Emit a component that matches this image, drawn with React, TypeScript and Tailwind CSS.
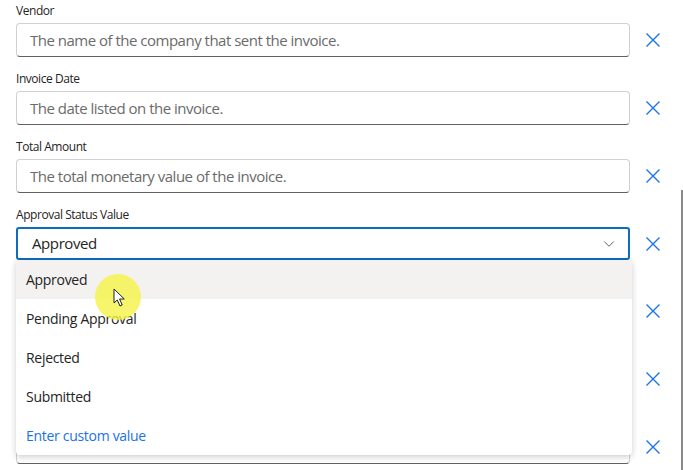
import { ChevronDown } from 'lucide-react';

const fields = [
  { label: 'Vendor', placeholder: 'The name of the company that sent the invoice.' },
  { label: 'Invoice Date', placeholder: 'The date listed on the invoice.' },
  { label: 'Total Amount', placeholder: 'The total monetary value of the invoice.' },
];

const options = ['Approved', 'Pending Approval', 'Rejected', 'Submitted'];

const XIcon = () => (
  <svg width="16" height="16" viewBox="0 0 16 16" className="text-[#1a73e8]">
    <path d="M1.5 1.5 L14.5 14.5 M14.5 1.5 L1.5 14.5" stroke="currentColor" strokeWidth="1.4" fill="none" />
  </svg>
);

const Row = ({ label, children }: { label?: string; children: React.ReactNode }) => (
  <div className="flex flex-col">
    <div className="h-[18px] mb-[3px] text-[12px] tracking-[-0.45px] leading-[18px] text-[#242424]">{label}</div>
    <div className="flex items-center">
      <div className="w-[614px]">{children}</div>
      <button className="ml-[15px] w-[16px] h-[16px] flex items-center justify-center">
        <XIcon />
      </button>
    </div>
  </div>
);

const TextBox = ({ placeholder }: { placeholder: string }) => (
  <div className="h-[34px] rounded-[4px] border border-[#d1d1d1] border-b-[#616161] bg-white flex items-center px-[13px] text-[15px] tracking-[-0.5px] text-[#6b6b6b]">
    {placeholder}
  </div>
);

export default function App() {
  return (
    <div
      className="relative w-[683px] h-[470px] overflow-hidden bg-white"
      style={{ fontFamily: '"Open Sans", "Noto Sans", sans-serif' }}
    >
      <div className="pl-4 pt-[2px] flex flex-col gap-[13px]">
        {fields.map((f) => (
          <Row key={f.label} label={f.label}>
            <TextBox placeholder={f.placeholder} />
          </Row>
        ))}

        {/* Approval status dropdown */}
        <Row label="Approval Status Value">
          <div className="h-[33px] rounded-[3px] border-2 border-[#0f6cbd] bg-white flex items-center justify-between pl-[14px] pr-[10px] text-[15px] tracking-[-0.4px] text-[#242424]">
            <span>Approved</span>
            <ChevronDown className="w-[18px] h-[18px] text-[#424242]" strokeWidth={1.1} />
          </div>
        </Row>

        <Row>
          <TextBox placeholder="" />
        </Row>
        <Row>
          <TextBox placeholder="" />
        </Row>
        <Row>
          <TextBox placeholder="" />
        </Row>
      </div>

      {/* Open listbox */}
      <div className="absolute left-4 top-[260px] w-[616px] bg-white rounded-b-[4px] shadow-[0_2px_6px_rgba(0,0,0,0.2)] text-[14px] tracking-[-0.3px] text-[#242424]">
        {options.map((o, i) => (
          <div
            key={o}
            className={`h-[39px] flex items-center pl-[10px] ${i === 0 ? 'bg-[#f3f2f1]' : ''}`}
          >
            {o}
          </div>
        ))}
        <div className="h-[39px] flex items-center pl-[10px] text-[#1a73e8]">Enter custom value</div>
      </div>

      {/* Cursor highlight */}
      <div className="absolute left-[95px] top-[274px] w-[46px] h-[46px] rounded-full bg-[rgba(245,242,70,0.8)]" />
      <svg className="absolute left-[113px] top-[288px]" width="13" height="20" viewBox="0 0 13 20">
        <path d="M1 1 L1 15 L4.3 12 L7 18 L9.2 17 L6.6 11 L11.3 11 Z" fill="white" stroke="#222" strokeWidth="1" strokeLinejoin="round" />
      </svg>

      {/* Scrollbar */}
      <div className="absolute right-0 top-[190px] w-[2px] h-[280px] bg-[#8a8a8a]" />
    </div>
  );
}
